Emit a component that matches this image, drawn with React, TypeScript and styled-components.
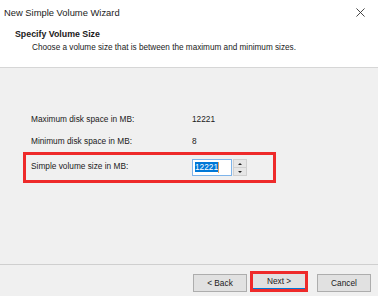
import React from "react";
import styled, { createGlobalStyle } from "styled-components";

const Global = createGlobalStyle`
  html, body {
    margin: 0;
    padding: 0;
    background: #ffffff;
  }
  body {
    font-family: "Liberation Sans", Arial, sans-serif;
    color: #1a1a1a;
  }
`;

const Window = styled.div`
  width: 378px;
  height: 296px;
  display: flex;
  flex-direction: column;
  background: #f0f0f0;
  overflow: hidden;
`;

const TitleBar = styled.div`
  height: 24px;
  display: flex;
  align-items: center;
  justify-content: space-between;
  background: #ffffff;
  padding: 0 13px 0 4px;
`;

const TitleText = styled.span`
  font-size: 9.4px;
  color: #222;
`;

const CloseIcon = styled.svg`
  width: 9px;
  height: 9px;
  display: block;
`;

const Header = styled.div`
  height: 44px;
  background: #ffffff;
  border-bottom: 1px solid #d6d6d6;
  padding: 4px 0 0 15px;
  box-sizing: border-box;
`;

const HeaderTitle = styled.div`
  font-size: 8.8px;
  font-weight: bold;
  line-height: 13px;
`;

const HeaderSub = styled.div`
  font-size: 8.2px;
  line-height: 13px;
  padding-left: 17px;
`;

const Body = styled.div`
  flex: 1;
  display: flex;
  flex-direction: column;
  padding: 40px 0 0 23px;
`;

const Row = styled.div`
  display: grid;
  grid-template-columns: 161px auto;
  align-items: center;
  height: 22px;
  padding-left: 8px;
  font-size: 8.3px;
`;

const Highlight = styled.div`
  width: 253px;
  height: 31px;
  box-sizing: border-box;
  border: 3px solid #ee2a2a;
  display: grid;
  grid-template-columns: 161px auto;
  align-items: start;
  padding: 4px 0 0 5px;
  font-size: 8.3px;
`;

const Label = styled.span`
  line-height: 12px;
  padding-top: 1px;
`;

const Spin = styled.div`
  display: flex;
  align-items: stretch;
  height: 17px;
`;

const Input = styled.div`
  width: 40px;
  box-sizing: border-box;
  border: 1px solid #7eb4ea;
  background: #fff;
  padding: 2px 0 0 2px;
  font-size: 8.3px;
  line-height: 11px;
`;

const Selected = styled.span`
  background: #0078d7;
  color: #fff;
`;

const Caret = styled.span`
  display: inline-block;
  width: 1px;
  height: 11px;
  background: #e0a060;
  vertical-align: top;
`;

const SpinButtons = styled.div`
  width: 14px;
  margin-left: 1px;
  display: flex;
  flex-direction: column;
  border: 1px solid #d0d0d0;
  box-sizing: border-box;
`;

const SpinButton = styled.div`
  flex: 1;
  background: #e6e6e6;
  display: flex;
  align-items: center;
  justify-content: center;
  & + & {
    border-top: 1px solid #d0d0d0;
  }
`;

const Arrow = styled.span<{ $up?: boolean }>`
  width: 0;
  height: 0;
  border-left: 2px solid transparent;
  border-right: 2px solid transparent;
  ${({ $up }) =>
    $up ? "border-bottom: 2px solid #222;" : "border-top: 2px solid #222;"}
`;

const Footer = styled.div`
  height: 32px;
  border-top: 1px solid #cfcfcf;
  box-sizing: border-box;
  display: flex;
  align-items: center;
  justify-content: flex-end;
  padding: 4px 7px 0 0;
`;

const Button = styled.div<{ $focus?: boolean }>`
  width: 54px;
  height: 18px;
  box-sizing: border-box;
  background: #e1e1e1;
  border: 1px solid #adadad;
  display: flex;
  align-items: center;
  justify-content: center;
  font-size: 8.3px;
  margin-left: ${({ $focus }) => ($focus ? "3px" : "9px")};
  ${({ $focus }) =>
    $focus &&
    `
    width: 58px;
    height: 21px;
    border: 3px solid #ee2a2a;
    box-shadow: inset 0 -1px 0 #0078d7;
    margin-top: -3px;
  `}
`;

export default function App() {
  return (
    <Window>
      <Global />
      <TitleBar>
        <TitleText>New Simple Volume Wizard</TitleText>
        <CloseIcon viewBox="0 0 10 10">
          <path d="M0.5 0.5 L9.5 9.5 M9.5 0.5 L0.5 9.5" stroke="#333" strokeWidth="1" />
        </CloseIcon>
      </TitleBar>
      <Header>
        <HeaderTitle>Specify Volume Size</HeaderTitle>
        <HeaderSub>
          Choose a volume size that is between the maximum and minimum sizes.
        </HeaderSub>
      </Header>
      <Body>
        <Row>
          <span>Maximum disk space in MB:</span>
          <span>12221</span>
        </Row>
        <Row>
          <span>Minimum disk space in MB:</span>
          <span>8</span>
        </Row>
        <Highlight>
          <Label>Simple volume size in MB:</Label>
          <Spin>
            <Input>
              <Selected>12221</Selected>
              <Caret />
            </Input>
            <SpinButtons>
              <SpinButton>
                <Arrow $up />
              </SpinButton>
              <SpinButton>
                <Arrow />
              </SpinButton>
            </SpinButtons>
          </Spin>
        </Highlight>
      </Body>
      <Footer>
        <Button>&lt; Back</Button>
        <Button $focus>Next &gt;</Button>
        <Button>Cancel</Button>
      </Footer>
    </Window>
  );
}
